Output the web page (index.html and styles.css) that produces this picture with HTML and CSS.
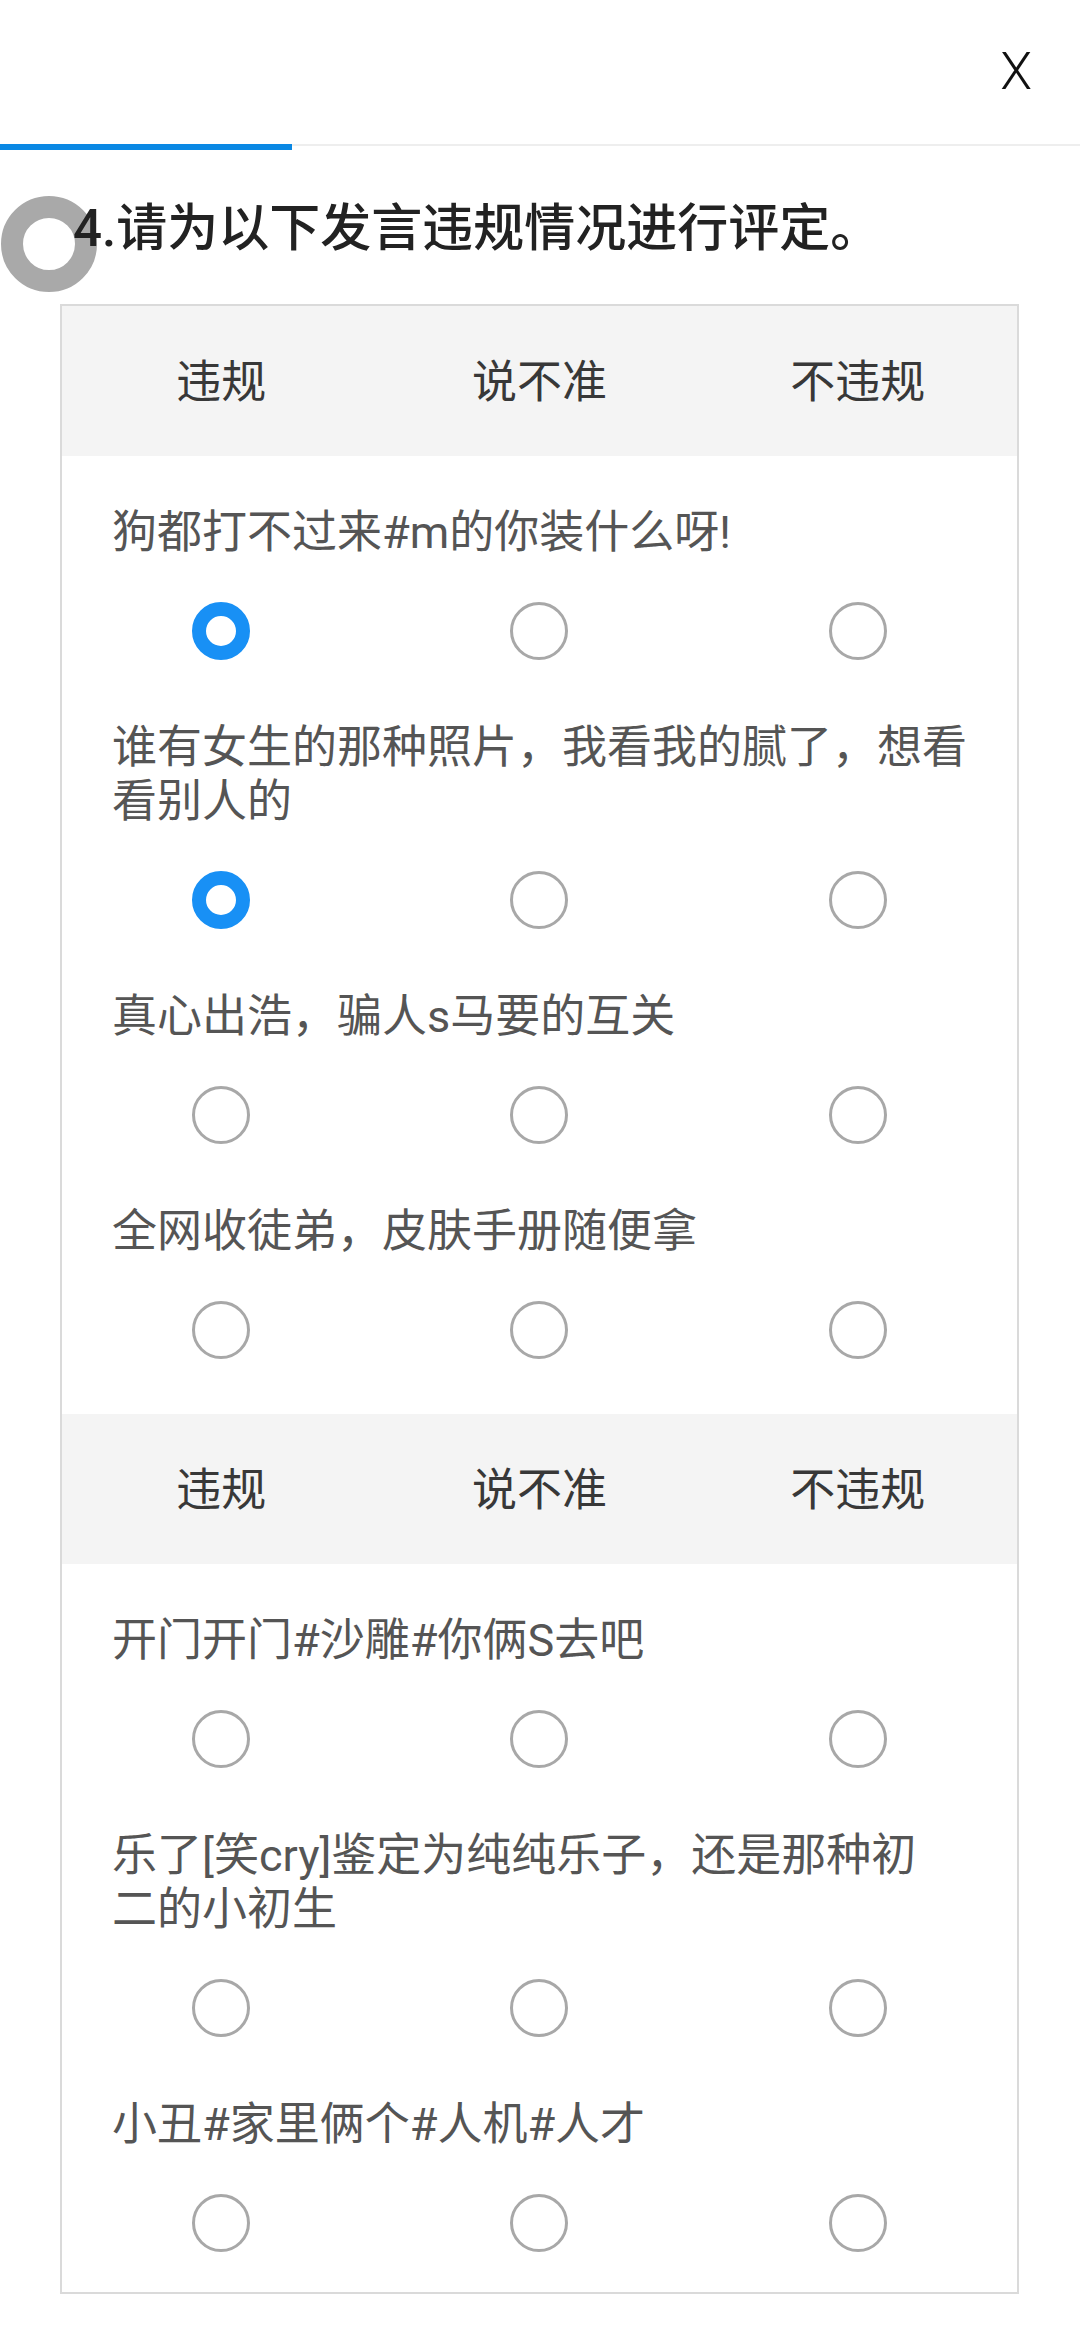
FILE: index.html
```html
<!DOCTYPE html>
<html lang="zh-CN">
<head>
    <meta charset="UTF-8">
    <meta name="viewport" content="width=device-width, initial-scale=1.0">
    <title>发言评定</title>
    <link rel="stylesheet" href="styles.css">
</head>
<body>
    <!-- 顶部关闭栏 -->
    <div class="top-bar">
        <span class="close-btn">X</span>
    </div>
    <!-- 答题进度 -->
    <div class="progress">
        <div class="progress-bar" style="width: 292px;"></div>
    </div>

    <div class="touch-ring"></div>

    <h1 class="question-title">4.请为以下发言违规情况进行评定。</h1>

    <div class="matrix">
        <div class="group">
            <div class="matrix-head">
                <span>违规</span>
                <span>说不准</span>
                <span>不违规</span>
            </div>
            <div class="item">
                <div class="item-text">狗都打不过来#m的你装什么呀!</div>
                <div class="item-options">
                    <span class="radio checked"></span>
                    <span class="radio"></span>
                    <span class="radio"></span>
                </div>
            </div>
            <div class="item">
                <div class="item-text">谁有女生的那种照片，我看我的腻了，想看看别人的</div>
                <div class="item-options">
                    <span class="radio checked"></span>
                    <span class="radio"></span>
                    <span class="radio"></span>
                </div>
            </div>
            <div class="item">
                <div class="item-text">真心出浩，骗人s马要的互关</div>
                <div class="item-options">
                    <span class="radio"></span>
                    <span class="radio"></span>
                    <span class="radio"></span>
                </div>
            </div>
            <div class="item">
                <div class="item-text">全网收徒弟，皮肤手册随便拿</div>
                <div class="item-options">
                    <span class="radio"></span>
                    <span class="radio"></span>
                    <span class="radio"></span>
                </div>
            </div>
        </div>

        <div class="group">
            <div class="matrix-head">
                <span>违规</span>
                <span>说不准</span>
                <span>不违规</span>
            </div>
            <div class="item">
                <div class="item-text">开门开门#沙雕#你俩S去吧</div>
                <div class="item-options">
                    <span class="radio"></span>
                    <span class="radio"></span>
                    <span class="radio"></span>
                </div>
            </div>
            <div class="item">
                <div class="item-text">乐了[笑cry]鉴定为纯纯乐子，还是那种初<br>二的小初生</div>
                <div class="item-options">
                    <span class="radio"></span>
                    <span class="radio"></span>
                    <span class="radio"></span>
                </div>
            </div>
            <div class="item">
                <div class="item-text">小丑#家里俩个#人机#人才</div>
                <div class="item-options">
                    <span class="radio"></span>
                    <span class="radio"></span>
                    <span class="radio"></span>
                </div>
            </div>
        </div>
    </div>
</body>
</html>
```

FILE: styles.css
```css
/* 页面整体 */
body {
    margin: 0;
    background-color: white;
    font-family: Roboto, "Noto Sans CJK SC", sans-serif;
    color: #333;
}

/* 顶部栏 */
.top-bar {
    height: 144px;
    display: flex;
    align-items: center;
    justify-content: flex-end;
    padding-right: 48px;
}

.close-btn {
    font-size: 52px;
    font-weight: 300;
    color: #111;
    line-height: 1;
}

/* 进度条 */
.progress {
    height: 6px;
    background: linear-gradient(#eeeeee 2px, transparent 2px);
}

.progress-bar {
    height: 6px;
    background-color: #0a88e4;
}

/* 左上角悬浮的圆环 */
.touch-ring {
    position: absolute;
    left: 1px;
    top: 196px;
    width: 96px;
    height: 96px;
    box-sizing: border-box;
    border: 22px solid #a9a9a9;
    border-radius: 50%;
}

.question-title {
    position: relative;
    margin: 44px 0 40px;
    padding-left: 73px;
    font-size: 51px;
    line-height: 70px;
    font-weight: 500;
    color: #222;
}

/* 矩阵题表格 */
.matrix {
    margin-left: 60px;
    width: 959px;
    box-sizing: border-box;
    border: 2px solid #dadada;
}

.group {
    padding-bottom: 44px;
}

.group:last-child {
    padding-bottom: 29px;
}

.matrix-head {
    display: grid;
    grid-template-columns: 1fr 1fr 1fr;
    align-items: center;
    height: 150px;
    box-sizing: border-box;
    padding-bottom: 6px;
    background-color: #f4f4f4;
    text-align: center;
    font-size: 45px;
    color: #383838;
}

.item {
    padding: 50px 0 11px;
}

.item-text {
    padding: 0 40px 0 50px;
    font-size: 45px;
    line-height: 54px;
    color: #555;
}

.item-options {
    display: grid;
    grid-template-columns: 1fr 1fr 1fr;
    justify-items: center;
    margin-top: 42px;
}

/* 单选圆圈 */
.radio {
    width: 58px;
    height: 58px;
    box-sizing: border-box;
    border: 3px solid #a8a8a8;
    border-radius: 50%;
    background-color: white;
}

.radio.checked {
    border: 14px solid #1890f5;
}
```
